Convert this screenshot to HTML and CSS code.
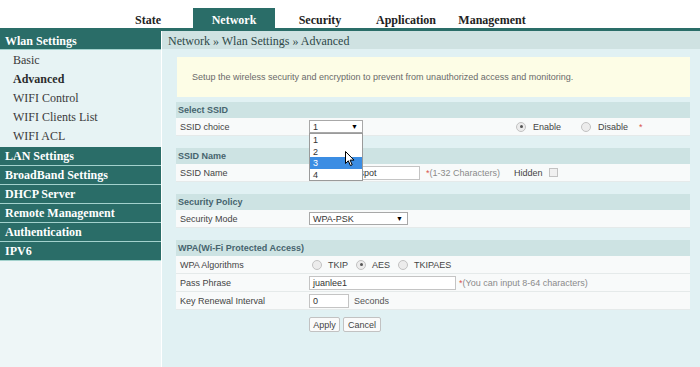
FILE: index.html
```html
<!DOCTYPE html>
<html lang="en">
<head>
  <meta charset="UTF-8" />
  <title>Wlan Settings - Advanced</title>
  <link rel="stylesheet" href="styles.css">
</head>
<body>
  <div class="topnav">
    <a class="tab">State</a>
    <a class="tab active">Network</a>
    <a class="tab">Security</a>
    <a class="tab">Application</a>
    <a class="tab">Management</a>
  </div>

  <div class="layout">
    <aside class="sidebar">
      <div class="menu-head">Wlan Settings</div>
      <ul class="submenu">
        <li>Basic</li>
        <li class="current">Advanced</li>
        <li>WIFI Control</li>
        <li>WIFI Clients List</li>
        <li>WIFI ACL</li>
      </ul>
      <div class="menu-head">LAN Settings</div>
      <div class="menu-head">BroadBand Settings</div>
      <div class="menu-head">DHCP Server</div>
      <div class="menu-head">Remote Management</div>
      <div class="menu-head">Authentication</div>
      <div class="menu-head">IPV6</div>
    </aside>

    <main class="main">
      <div class="crumb">Network &raquo; Wlan Settings &raquo; Advanced</div>
      <div class="content">
        <div class="notice">Setup the wireless security and encryption to prevent from unauthorized access and monitoring.</div>

        <section class="group first">
          <div class="group-title">Select SSID</div>
          <div class="row">
            <div class="label">SSID choice</div>
            <div class="field">
              <span class="select small"><span>1</span><span class="caret">&#9660;</span></span>
              <ul class="dropdown">
                <li>1</li>
                <li>2</li>
                <li class="hover">3</li>
                <li>4</li>
              </ul>
              <svg class="cursor" width="11" height="16" viewBox="0 0 11 16">
                <path d="M0.5 0.5 L0.5 12.5 L3.3 9.8 L5.4 14.6 L7.2 13.8 L5.1 9.1 L9 9.1 Z" fill="#fff" stroke="#000" stroke-width="1" stroke-linejoin="round"/>
              </svg>
            </div>
            <div class="extra">
              <span class="radio on"></span><span class="opt">Enable</span>
              <span class="radio"></span><span class="opt last">Disable</span>
              <span class="req">*</span>
            </div>
          </div>
        </section>

        <section class="group">
          <div class="group-title">SSID Name</div>
          <div class="row">
            <div class="label">SSID Name</div>
            <div class="field">
              <span class="input ssid">juanlee_hotspot</span>
              <span class="note"><span class="req">*</span>(1-32 Characters)</span>
            </div>
            <div class="extra hidden-opt">
              <span class="hidden-label">Hidden</span><span class="check"></span>
            </div>
          </div>
        </section>

        <section class="group">
          <div class="group-title">Security Policy</div>
          <div class="row">
            <div class="label">Security Mode</div>
            <div class="field">
              <span class="select wide"><span>WPA-PSK</span><span class="caret">&#9660;</span></span>
            </div>
          </div>
        </section>

        <section class="group">
          <div class="group-title">WPA(Wi-Fi Protected Access)</div>
          <div class="row">
            <div class="label">WPA Algorithms</div>
            <div class="field span algos">
              <span class="radio"></span><span class="opt">TKIP</span>
              <span class="radio on"></span><span class="opt">AES</span>
              <span class="radio"></span><span class="opt">TKIPAES</span>
            </div>
          </div>
          <div class="row">
            <div class="label">Pass Phrase</div>
            <div class="field span">
              <span class="input pass">juanlee1</span>
              <span class="note tight"><span class="req">*</span>(You can input 8-64 characters)</span>
            </div>
          </div>
          <div class="row">
            <div class="label">Key Renewal Interval</div>
            <div class="field span">
              <span class="input short">0</span>
              <span class="unit">Seconds</span>
            </div>
          </div>
        </section>

        <div class="actions">
          <button class="btn apply">Apply</button>
          <button class="btn cancel">Cancel</button>
        </div>
      </div>
    </main>
  </div>
</body>
</html>
```

FILE: styles.css
```css
html, body {
  height: 100%;
}

body {
  margin: 0;
  background-color: #ffffff;
  font-family: Arial, "Liberation Sans", sans-serif;
  color: #444;
}

/* === Top tabs === */
.topnav {
  height: 28px;
  display: flex;
  gap: 4px;
  padding-left: 107px;
}

.tab {
  width: 82px;
  height: 20px;
  margin-top: 8px;
  text-align: center;
  font: bold 12px/24px "Liberation Serif", "Times New Roman", serif;
  color: #222;
}

.tab.active {
  background-color: #2a6d68;
  color: #ffffff;
}

/* === Layout === */
.layout {
  display: flex;
  border-top: 3px solid #2a6d68;
  min-height: 336px;
}

.sidebar {
  width: 161px;
  background-color: #eef6f7;
  font-family: "Liberation Serif", "Times New Roman", serif;
  font-size: 12px;
}

.menu-head {
  height: 18px;
  line-height: 18px;
  padding-left: 5px;
  background-color: #2a6d68;
  border-bottom: 1px solid #a3d2cd;
  color: #ffffff;
  font-weight: bold;
}

.menu-head:first-child {
  line-height: 21px;
}

.submenu {
  list-style: none;
  margin: 0;
  padding: 0 0 2px;
  background-color: #e7f3f4;
}

.submenu li {
  height: 19px;
  line-height: 20px;
  padding-left: 13px;
  color: #3a3a3a;
}

.submenu li.current {
  font-weight: bold;
  color: #2c2c2c;
}

.main {
  flex: 1;
  margin-left: 1px;
  background-color: #e1f1f3;
}

.crumb {
  height: 18px;
  padding-left: 6px;
  background-color: #cfe2e2;
  font: 12px/21px "Liberation Serif", "Times New Roman", serif;
  color: #2e4848;
}

.content {
  padding: 8px 10px 0 14px;
}

.notice {
  height: 40px;
  line-height: 40px;
  margin-left: 1px;
  padding-left: 15px;
  background-color: #fdfde6;
  font-size: 9px;
  color: #6a6a6a;
}

/* === Form groups === */
.group {
  margin-top: 12px;
}

.group.first {
  margin-top: 5px;
}

.group-title {
  height: 16px;
  line-height: 16px;
  padding-left: 2px;
  background-color: #cde3e3;
  font-size: 9px;
  font-weight: bold;
  color: #46646e;
}

.row {
  display: grid;
  grid-template-columns: 133px 203px 1fr;
  align-items: center;
  box-sizing: border-box;
  height: 18px;
  background-color: #f8fafa;
  border-bottom: 1px solid #e5eaea;
  font-size: 9px;
}

.label {
  padding-left: 4px;
  color: #444;
}

.field {
  position: relative;
  display: flex;
  align-items: center;
}

.field.span {
  grid-column: span 2;
}

.extra {
  display: flex;
  align-items: center;
  padding-left: 4px;
}

.hidden-opt {
  padding-left: 2px;
}

.select {
  display: inline-flex;
  justify-content: space-between;
  align-items: center;
  box-sizing: border-box;
  height: 13px;
  padding: 0 4px 0 3px;
  background-color: #ffffff;
  border: 1px solid #a8a8a8;
  color: #333;
}

.select.small {
  width: 54px;
}

.select.wide {
  width: 99px;
}

.caret {
  font-size: 7px;
  color: #000;
}

.dropdown {
  position: absolute;
  top: 13px;
  left: 0;
  z-index: 5;
  width: 54px;
  box-sizing: border-box;
  margin: 0;
  padding: 0;
  list-style: none;
  background-color: #ffffff;
  border: 1px solid #9a9a9a;
}

.dropdown li {
  height: 11.6px;
  line-height: 12px;
  padding-left: 3px;
  color: #333;
}

.dropdown li.hover {
  background-color: #3b8de3;
  color: #ffffff;
}

.cursor {
  position: absolute;
  top: 31px;
  left: 36px;
  z-index: 6;
}

.input {
  display: inline-block;
  box-sizing: border-box;
  height: 14px;
  line-height: 12px;
  padding-left: 3px;
  background-color: #ffffff;
  border: 1px solid #c4c4c4;
  color: #333;
  overflow: hidden;
  white-space: nowrap;
}

.input.ssid {
  width: 111px;
}

.input.pass {
  width: 147px;
}

.input.short {
  width: 40px;
}

.note {
  margin-left: 6px;
  color: #8a8a8a;
}

.note.tight {
  margin-left: 3px;
}

.req {
  color: #d9534f;
}

.extra .req {
  margin-left: 11px;
}

.unit {
  margin-left: 5px;
  color: #555;
}

.radio {
  display: inline-block;
  position: relative;
  box-sizing: border-box;
  width: 10px;
  height: 10px;
  border-radius: 50%;
  border: 1px solid #c2c2c2;
  background-color: #ececec;
}

.radio.on::after {
  content: "";
  position: absolute;
  top: 2.5px;
  left: 2.5px;
  width: 3px;
  height: 3px;
  border-radius: 50%;
  background-color: #555;
}

.opt {
  margin-left: 7px;
  margin-right: 20px;
  color: #444;
}

.opt.last {
  margin-right: 0;
}

.algos {
  padding-left: 3px;
}

.algos .opt {
  margin-left: 6px;
  margin-right: 8px;
}

.hidden-label {
  margin-right: 6px;
  color: #444;
}

.check {
  display: inline-block;
  box-sizing: border-box;
  width: 9px;
  height: 9px;
  border: 1px solid #c2c2c2;
  background-color: #f0f0f0;
}

.actions {
  display: flex;
  gap: 3px;
  margin-top: 7px;
  padding-left: 133px;
}

.btn {
  height: 15px;
  padding: 0 3px;
  background-color: #fafafa;
  border: 1px solid #c2c2c2;
  border-radius: 2px;
  font: 9px Arial, "Liberation Sans", sans-serif;
  color: #444;
}

.btn.apply {
  width: 31px;
}

.btn.cancel {
  width: 38px;
}
```
